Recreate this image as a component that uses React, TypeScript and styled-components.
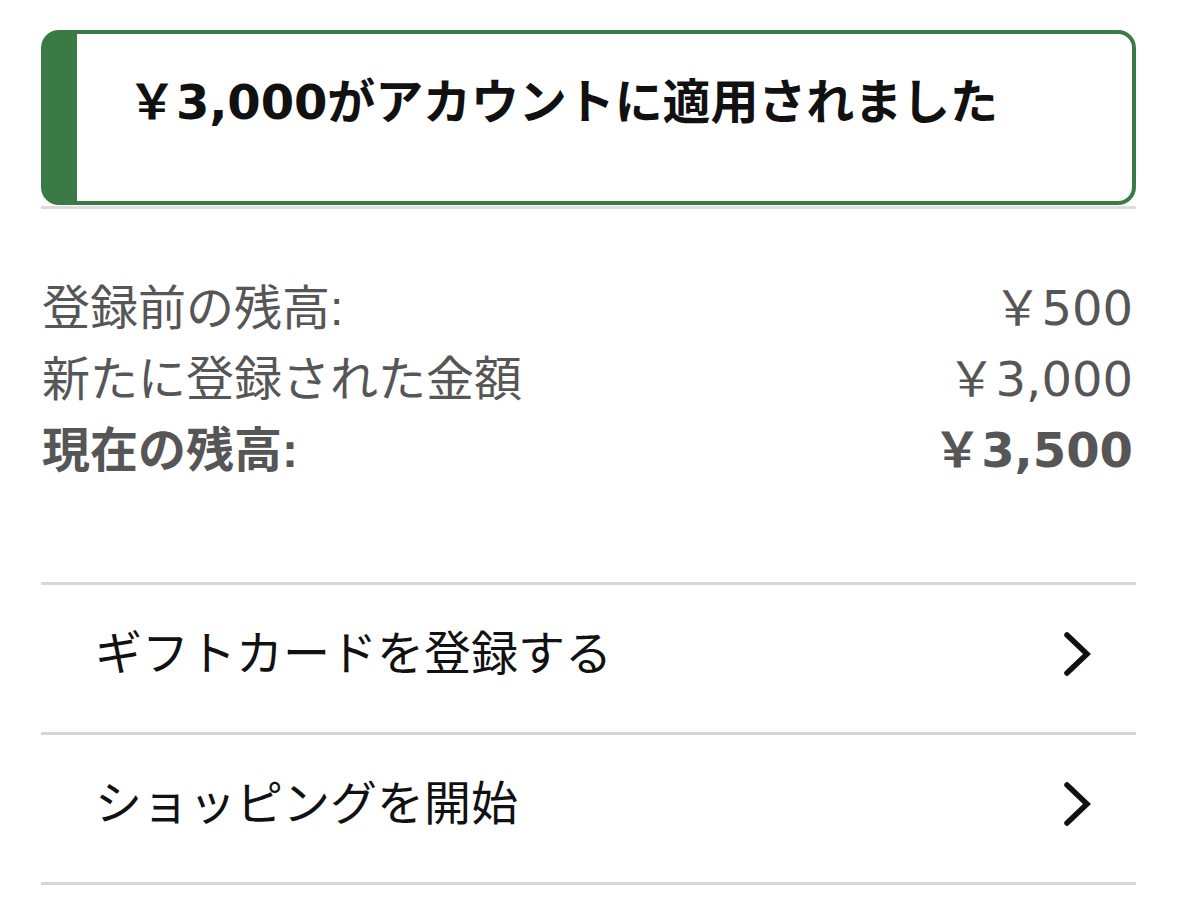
import styled, { createGlobalStyle } from 'styled-components';

const GlobalStyle = createGlobalStyle`
  html, body {
    margin: 0;
    padding: 0;
    background: #ffffff;
  }
  body {
    font-family: "Liberation Sans", "Noto Sans CJK JP", sans-serif;
  }
`;

const S = {
  Page: styled.div`
    padding: 30px 42px 0 41px;
  `,

  Banner: styled.div`
    border: 4px solid #3a7b45;
    border-left-width: 36px;
    border-radius: 18px;
    padding: 39px 20px 70px 51px;
    background: #ffffff;
  `,

  BannerTitle: styled.h1`
    margin: 0;
    font-family: "DejaVu Sans", "Noto Sans CJK JP", sans-serif;
    font-size: 48px;
    line-height: 58px;
    font-weight: 700;
    color: #111111;
    letter-spacing: -0.1px;
  `,

  BannerRule: styled.div`
    height: 3px;
    background: #dcdcdc;
    margin-top: 1px;
  `,

  Summary: styled.dl`
    display: grid;
    grid-template-columns: 1fr auto;
    align-items: baseline;
    margin: 0;
    padding: 64px 3px 96px 1px;
  `,

  Label: styled.dt<{ $strong?: boolean }>`
    margin: 0;
    font-size: 48px;
    line-height: 70px;
    color: #565656;
    font-weight: ${({ $strong }) => ($strong ? 700 : 400)};
  `,

  Amount: styled.dd<{ $strong?: boolean }>`
    margin: 0;
    font-family: "DejaVu Sans", "Noto Sans CJK JP", sans-serif;
    font-size: 48px;
    line-height: 70px;
    text-align: right;
    color: #565656;
    font-weight: ${({ $strong }) => ($strong ? 700 : 400)};
  `,

  Menu: styled.ul`
    list-style: none;
    margin: 0;
    padding: 0;
    border-top: 3px solid #d6d6d6;
  `,

  MenuItem: styled.li`
    display: flex;
    align-items: center;
    justify-content: space-between;
    height: 150px;
    padding: 0 44px 10px 54px;
    box-sizing: border-box;
    border-bottom: 3px solid #d6d6d6;
    cursor: pointer;
  `,

  MenuLabel: styled.span`
    font-size: 47px;
    line-height: 60px;
    color: #111111;
  `,

  Chevron: styled.svg`
    width: 30px;
    height: 44px;
    display: block;
  `,
};

function ChevronIcon() {
  return (
    <S.Chevron viewBox="0 0 30 44" fill="none">
      <path
        d="M5 3 L25 22 L5 41"
        stroke="#111111"
        strokeWidth="5.5"
        strokeLinecap="round"
        strokeLinejoin="miter"
      />
    </S.Chevron>
  );
}

const balances = [
  { label: '登録前の残高:', amount: '￥500' },
  { label: '新たに登録された金額', amount: '￥3,000' },
  { label: '現在の残高:', amount: '￥3,500', strong: true },
];

const links = ['ギフトカードを登録する', 'ショッピングを開始'];

function App() {
  return (
    <>
      <GlobalStyle />
      <S.Page>
        <S.Banner>
          <S.BannerTitle>￥3,000がアカウントに適用されました</S.BannerTitle>
        </S.Banner>
        <S.BannerRule />

        <S.Summary>
          {balances.map((row) => (
            <>
              <S.Label key={`${row.label}-l`} $strong={row.strong}>
                {row.label}
              </S.Label>
              <S.Amount key={`${row.label}-a`} $strong={row.strong}>
                {row.amount}
              </S.Amount>
            </>
          ))}
        </S.Summary>

        <S.Menu>
          {links.map((text) => (
            <S.MenuItem key={text}>
              <S.MenuLabel>{text}</S.MenuLabel>
              <ChevronIcon />
            </S.MenuItem>
          ))}
        </S.Menu>
      </S.Page>
    </>
  );
}

export default App;
